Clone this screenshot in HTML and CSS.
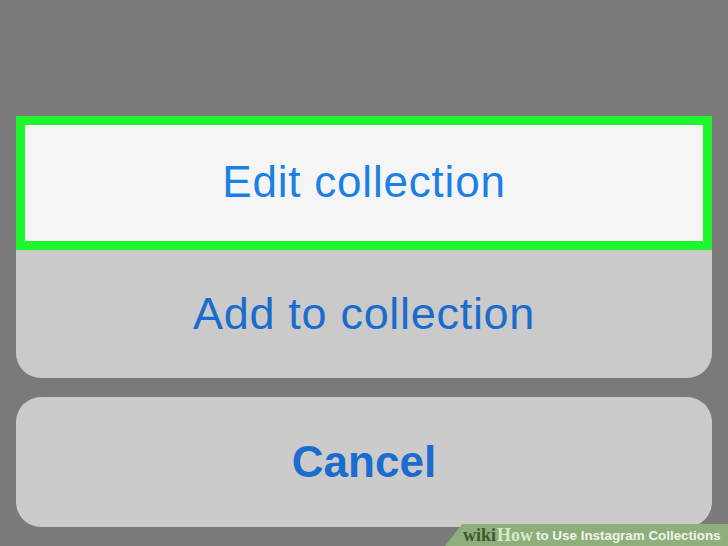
FILE: index.html
```html
<!DOCTYPE html>
<html>
<head>
<meta charset="utf-8">
<link rel="stylesheet" href="styles.css">
</head>
<body>
<div class="sheet">
  <div class="group">
    <div class="row row-edit"><span class="label label-edit">Edit collection</span></div>
    <div class="row row-add"><span class="label label-add">Add to collection</span></div>
  </div>
  <div class="cancel"><span class="label label-cancel">Cancel</span></div>
</div>
<div class="watermark"><span class="wiki">wiki</span><span class="how">How</span><span class="title">to Use Instagram Collections</span></div>
</body>
</html>
```
FILE: styles.css
```css
html, body {
  margin: 0;
  padding: 0;
}
body {
  width: 728px;
  height: 546px;
  overflow: hidden;
  position: relative;
  font-family: "Liberation Sans", Arial, sans-serif;
  background:
    linear-gradient(to bottom, transparent 441px, #6d7b6a 441px, #6d7b6a 442px, transparent 442px),
    #7a7a7a;
}
.sheet {
  padding: 116px 16px 0 16px;
  display: flex;
  flex-direction: column;
  gap: 19px;
}
.group {
  display: flex;
  flex-direction: column;
}
.row {
  display: flex;
  align-items: center;
  justify-content: center;
  box-sizing: border-box;
}
.row-edit {
  height: 134px;
  background: #f5f5f6;
  border: 9px solid #1ff52c;
}
.row-add {
  height: 128px;
  background: #cacaca;
  border-radius: 0 0 25px 25px;
}
.cancel {
  height: 130px;
  background: #cbcbcb;
  border-radius: 25px;
  display: flex;
  align-items: center;
  justify-content: center;
}
.label {
  font-size: 45px;
  color: #1a6cce;
  line-height: 1;
  padding-bottom: 2px;
}
.label-add {
  letter-spacing: 0.7px;
}
.label-edit {
  color: #1b80e6;
  font-size: 44px;
  letter-spacing: 0.8px;
}
.label-cancel {
  font-weight: bold;
  font-size: 44px;
  padding-bottom: 0;
}
.watermark {
  position: absolute;
  left: 445px;
  bottom: 0;
  width: 283px;
  height: 22px;
  background: #8eaf7b;
  clip-path: polygon(17px 0, 100% 0, 100% 100%, 0 100%);
  display: flex;
  align-items: center;
  padding-left: 18px;
  padding-top: 1px;
  box-sizing: border-box;
  white-space: nowrap;
}
.wiki {
  font-family: "Liberation Serif", "Times New Roman", serif;
  font-weight: bold;
  font-size: 18px;
  color: #3d5730;
}
.how {
  font-family: "Liberation Serif", "Times New Roman", serif;
  font-weight: bold;
  font-size: 18px;
  color: #d9e8cc;
  margin-left: 1px;
}
.title {
  font-weight: bold;
  font-size: 13.4px;
  color: #eef4e9;
  margin-left: 3px;
}
```
